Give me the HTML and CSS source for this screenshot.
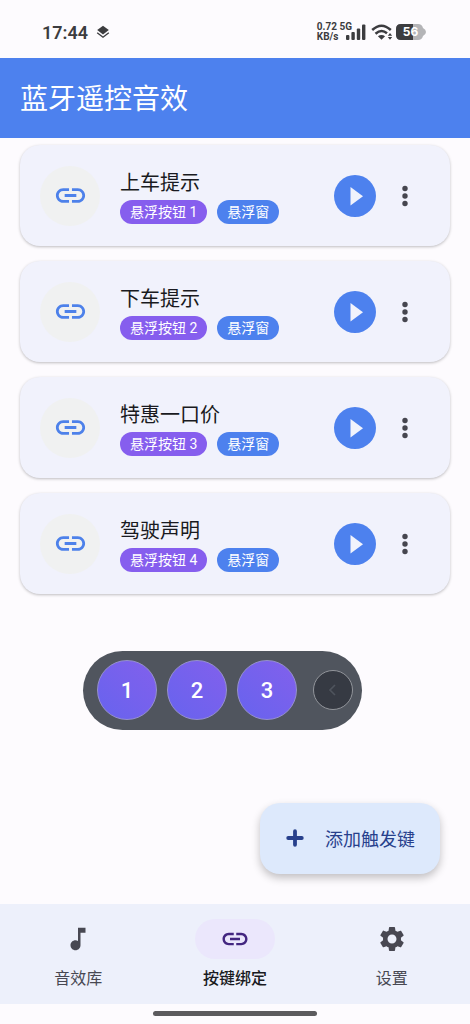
FILE: index.html
```html
<!DOCTYPE html>
<html lang="zh-CN">
<head>
<meta charset="utf-8">
<meta name="viewport" content="width=device-width, initial-scale=1">
<title>蓝牙遥控音效</title>
<link rel="stylesheet" href="styles.css">
</head>
<body>
<svg class="defs" aria-hidden="true">
  <symbol id="link" viewBox="0 0 24 24"><path d="M3.9 12c0-1.71 1.39-3.1 3.1-3.1h4V7H7c-2.76 0-5 2.24-5 5s2.24 5 5 5h4v-1.9H7c-1.71 0-3.1-1.39-3.1-3.1zM8 13h8v-2H8v2zm9-6h-4v1.9h4c1.71 0 3.1 1.39 3.1 3.1s-1.39 3.1-3.1 3.1h-4V17h4c2.76 0 5-2.24 5-5s-2.24-5-5-5z"/></symbol>
  <symbol id="play" viewBox="0 0 42 42"><circle cx="21" cy="21" r="21"/><path d="M16.500 12v18.500l12.500-9.250z" fill="#f1f3fc"/></symbol>
  <symbol id="more" viewBox="0 0 24 24"><circle cx="12" cy="4.500" r="2.700"/><circle cx="12" cy="12" r="2.700"/><circle cx="12" cy="19.500" r="2.700"/></symbol>
</svg>
<div class="screen">
  <div class="status">
    <span class="clock">17:44</span>
    <svg class="layers" viewBox="0 0 14 14" width="14" height="14"><path d="M7 .8 12.8 5 7 9.4 1.2 5z"/><path d="M1.2 7.8 7 12.2l5.8-4.4" fill="none" stroke="#3c3c3f" stroke-width="1.4"/></svg>
    <span class="speed">0.72 5G<br>KB/s</span>
    <svg class="signal" viewBox="0 0 20 16" width="20" height="16"><rect x="0" y="11" width="3.4" height="5" rx="1"/><rect x="5.4" y="8" width="3.4" height="8" rx="1"/><rect x="10.800" y="4.500" width="3.400" height="11.500" rx="1"/><rect x="16" y="0.500" width="3.400" height="15.500" rx="1"/></svg>
    <svg class="wifi" viewBox="0 0 22 16" width="22" height="16"><g fill="none" stroke="#3c3c3f" stroke-width="2.500"><path d="M1.200 6Q10.500-2.600 19.800 6"/><path d="M4.500 9.800Q10.500 4.600 16 9.300"/></g><path d="M6.900 12.200Q10.500 9.600 14.100 12.200L10.500 15.800z"/><path d="M19 9l2.200 2.800h-4.400zM19 15.800l2.200-2.800h-4.400z"/></svg>
    <span class="battery"><svg viewBox="0 0 30 16" width="30" height="16"><path d="M5 0H22Q26 0 27 4Q30 5.500 30 8T27 12Q26 16 22 16H5Q0 16 0 11V5Q0 0 5 0z" fill="#b4b4b7"/><path d="M5 0H17V16H5Q0 16 0 11V5Q0 0 5 0z"/></svg><b>56</b></span>
  </div>
  <header class="appbar"><h1>蓝牙遥控音效</h1></header>
  <main class="content">
    <ul class="list">
      <li class="card">
        <span class="badge"><svg><use href="#link"/></svg></span>
        <div class="info"><h2>上车提示</h2><div class="chips"><span class="chip key">悬浮按钮 1</span><span class="chip">悬浮窗</span></div></div>
        <button class="play" aria-label="播放"><svg><use href="#play"/></svg></button>
        <button class="more" aria-label="更多"><svg><use href="#more"/></svg></button>
      </li>
      <li class="card">
        <span class="badge"><svg><use href="#link"/></svg></span>
        <div class="info"><h2>下车提示</h2><div class="chips"><span class="chip key">悬浮按钮 2</span><span class="chip">悬浮窗</span></div></div>
        <button class="play" aria-label="播放"><svg><use href="#play"/></svg></button>
        <button class="more" aria-label="更多"><svg><use href="#more"/></svg></button>
      </li>
      <li class="card">
        <span class="badge"><svg><use href="#link"/></svg></span>
        <div class="info"><h2>特惠一口价</h2><div class="chips"><span class="chip key">悬浮按钮 3</span><span class="chip">悬浮窗</span></div></div>
        <button class="play" aria-label="播放"><svg><use href="#play"/></svg></button>
        <button class="more" aria-label="更多"><svg><use href="#more"/></svg></button>
      </li>
      <li class="card">
        <span class="badge"><svg><use href="#link"/></svg></span>
        <div class="info"><h2>驾驶声明</h2><div class="chips"><span class="chip key">悬浮按钮 4</span><span class="chip">悬浮窗</span></div></div>
        <button class="play" aria-label="播放"><svg><use href="#play"/></svg></button>
        <button class="more" aria-label="更多"><svg><use href="#more"/></svg></button>
      </li>
    </ul>
    <button class="fab"><svg viewBox="0 0 18 18" width="18" height="18"><path d="M9 2.200v13.600M2.200 9h13.600" stroke="#27408c" stroke-width="3.800" stroke-linecap="round"/></svg><span>添加触发键</span></button>
  </main>
  <nav class="tabs">
    <a href="#sounds"><span class="tab-icon"><svg viewBox="0 0 24 24"><path d="M12 3v10.550c-.59-.34-1.270-.55-2-.55-2.210 0-4 1.790-4 4s1.790 4 4 4 4-1.790 4-4V7h4V3h-6z"/></svg></span>音效库</a>
    <a href="#keys" class="active" aria-current="page"><span class="tab-icon"><svg><use href="#link"/></svg></span>按键绑定</a>
    <a href="#settings"><span class="tab-icon"><svg viewBox="0 0 24 24"><path d="M19.140 12.940c.04-.3.060-.61.060-.94 0-.32-.02-.64-.07-.94l2.030-1.580c.18-.14.230-.41.120-.61l-1.920-3.320c-.12-.22-.37-.29-.59-.22l-2.390.96c-.5-.38-1.030-.7-1.620-.94l-.36-2.540c-.04-.24-.24-.41-.48-.41h-3.840c-.24 0-.43.170-.47.410l-.36 2.540c-.59.240-1.130.570-1.620.940l-2.390-.96c-.22-.08-.47 0-.59.220L2.740 8.870c-.12.210-.08.470.120.610l2.030 1.580c-.05.300-.09.630-.09.940s.02.640.070.940l-2.030 1.580c-.18.140-.23.410-.12.610l1.920 3.320c.12.220.370.290.590.220l2.390-.96c.5.380 1.030.700 1.620.940l.36 2.540c.05.240.240.410.480.410h3.840c.24 0 .44-.17.470-.41l.36-2.540c.59-.24 1.130-.56 1.620-.94l2.390.96c.22.080.470 0 .59-.22l1.920-3.320c.12-.22.070-.47-.12-.61l-2.010-1.580zM12 15.600c-1.980 0-3.600-1.620-3.600-3.600s1.620-3.600 3.600-3.600 3.600 1.620 3.600 3.600-1.620 3.600-3.600 3.600z"/></svg></span>设置</a>
  </nav>
  <div class="gesture"><span></span></div>
  <div class="floating">
    <button class="num">1</button><button class="num">2</button><button class="num">3</button>
    <button class="collapse" aria-label="收起"><svg viewBox="0 0 16 16" width="16" height="16"><path d="M10 3 5 8l5 5" fill="none" stroke="#4f545d" stroke-width="1.600"/></svg></button>
  </div>
</div>
</body>
</html>
```

FILE: styles.css
```css
* { box-sizing: border-box; }
body {
  margin: 0;
  background: #fdfbfe;
  color: #191a21;
  font-family: "Noto Sans CJK SC", sans-serif;
}
h1, h2, ul { margin: 0; padding: 0; font-weight: 400; }
button { border: 0; padding: 0; background: none; font: inherit; color: inherit; cursor: pointer; }
svg { display: block; flex: none; }
.defs { position: absolute; width: 0; height: 0; }
.screen { position: relative; display: flex; flex-direction: column; min-height: 100vh; }

.status {
  display: flex;
  align-items: center;
  height: 58px;
  padding: 6px 44px 0 42px;
  color: #3c3c3f;
  fill: #3c3c3f;
  font-family: Roboto, sans-serif;
}
.clock { font-size: 18px; font-weight: 600; }
.layers { margin-left: 8px; }
.speed { margin-left: auto; font: 700 10px/10px Roboto, sans-serif; }
.signal { margin-left: -6px; }
.wifi { margin-left: 5px; }
.battery { position: relative; margin-left: 3px; }
.battery b {
  position: absolute;
  inset: 0;
  padding-right: 1px;
  color: #fff;
  font: 700 12px/16px Inter, sans-serif;
  text-align: center;
}

.appbar {
  display: flex;
  align-items: center;
  height: 80px;
  padding: 0 20px 2px;
  background: #4d81ee;
  color: #fff;
}
.appbar h1 { font-size: 28px; line-height: 40px; }

.content { position: relative; flex: 1; padding: 7px 20px 30px; }
.list { display: flex; flex-direction: column; gap: 15px; list-style: none; }
.card {
  display: flex;
  align-items: center;
  height: 101px;
  padding: 0 33px 0 20px;
  border-radius: 20px;
  background: #f1f2fc;
  box-shadow: 0 1px 3px rgba(0, 0, 0, .25);
}
.badge {
  display: grid;
  place-items: center;
  width: 60px;
  height: 60px;
  border-radius: 50%;
  background: #f0f1f1;
  fill: #4d81ea;
}
.badge svg { width: 35px; height: 35px; }
.info { flex: 1; margin-left: 20px; }
.info h2 { font-size: 20px; line-height: 28px; }
.chips { display: flex; gap: 10px; margin-top: 4px; }
.chip {
  padding: 0 10px;
  border-radius: 12px;
  background: #4d81ee;
  color: #fff;
  font-family: Roboto, "Noto Sans CJK SC", sans-serif;
  font-size: 14px;
  line-height: 24px;
  white-space: nowrap;
}
.key { background: #865eee; }
.play { fill: #4d81ee; }
.play svg { width: 42px; height: 42px; }
.more { margin-left: 17px; fill: #46464f; }
.more svg { width: 24px; height: 24px; }

.fab {
  position: absolute;
  right: 30px;
  bottom: 30px;
  display: flex;
  align-items: center;
  gap: 21px;
  height: 71px;
  padding: 0 25px 1px 26px;
  border-radius: 20px;
  background: #dde9fc;
  color: #27408c;
  font-size: 18px;
  box-shadow: 0 4px 8px rgba(0, 0, 0, .24);
}

.tabs {
  display: grid;
  grid-template-columns: repeat(3, 1fr);
  height: 100px;
  padding-top: 15px;
  background: #edf0fb;
}
.tabs a {
  display: flex;
  flex-direction: column;
  align-items: center;
  gap: 6px;
  color: #484852;
  fill: #484852;
  font-size: 16px;
  line-height: 24px;
  text-decoration: none;
}
.tab-icon { display: grid; place-items: center; width: 80px; height: 40px; border-radius: 20px; }
.tab-icon svg { width: 30px; height: 30px; }
.tabs .active { color: #191a21; fill: #432680; font-weight: 500; }
.active .tab-icon { background: #ebe7fc; }

.gesture { display: flex; justify-content: center; height: 20px; padding-top: 7px; }
.gesture span { width: 35%; height: 5px; border-radius: 3px; background: #5c5b5e; }

.floating {
  position: absolute;
  left: 83px;
  top: 651px;
  display: flex;
  align-items: center;
  gap: 10px;
  padding: 9px 9px 10px 14px;
  border-radius: 40px;
  background: #50555e;
}
.num {
  width: 60px;
  height: 60px;
  border: 1px solid #9690cf;
  border-radius: 50%;
  background: linear-gradient(225deg, #8260ec, #6763ee);
  color: #fff;
  font-family: Roboto, sans-serif;
  font-size: 22px;
  font-weight: 500;
}
.collapse {
  display: grid;
  place-items: center;
  width: 40px;
  height: 40px;
  margin-left: 6px;
  border: 1px solid #92959b;
  border-radius: 50%;
  background: #363a43;
}
```
